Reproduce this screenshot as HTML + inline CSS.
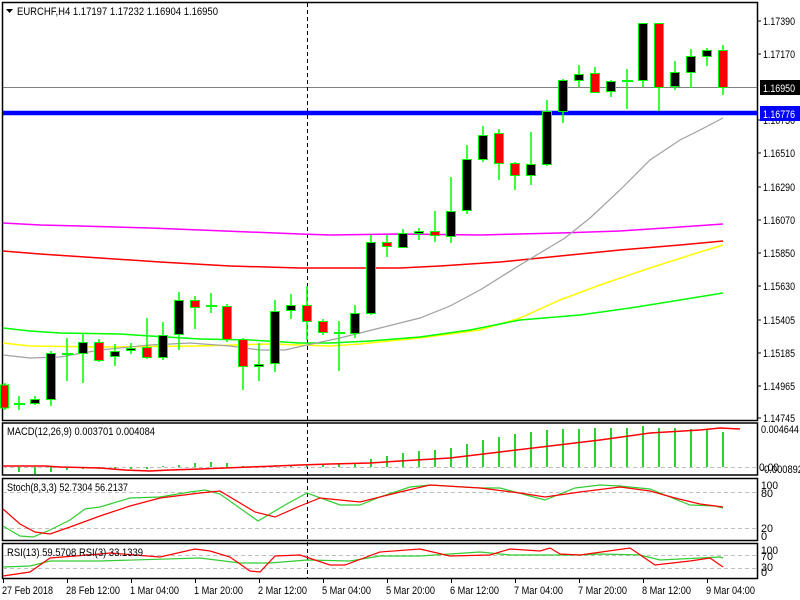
<!DOCTYPE html>
<html><head><meta charset="utf-8"><style>
html,body{margin:0;padding:0;background:#fff;width:800px;height:600px;overflow:hidden}
svg{display:block}
text{font-family:"Liberation Sans",sans-serif;font-size:11px;fill:#000}
</style></head><body>
<svg width="800" height="600" viewBox="0 0 800 600" xmlns="http://www.w3.org/2000/svg">
<rect width="800" height="600" fill="#fff"/>
<g fill="none" stroke="#000" stroke-width="1.5">
<rect x="2.5" y="2.5" width="755" height="418"/>
<rect x="2.5" y="423" width="755" height="52"/>
<rect x="2.5" y="478.5" width="755" height="62"/>
<rect x="2.5" y="543.5" width="755" height="35"/>
</g>
<g stroke="#c0c0c0" stroke-dasharray="4,3" stroke-width="1">
<line x1="3" y1="467.5" x2="757" y2="467.5"/>
<line x1="3" y1="492.5" x2="757" y2="492.5"/>
<line x1="3" y1="528.5" x2="757" y2="528.5"/>
<line x1="3" y1="555.5" x2="757" y2="555.5"/>
<line x1="3" y1="568.5" x2="757" y2="568.5"/>
</g>
<line x1="3" y1="87.5" x2="757" y2="87.5" stroke="#808080" stroke-width="1"/>
<line x1="3" y1="113" x2="757" y2="113" stroke="#0000ff" stroke-width="4.5"/>
<line x1="307.5" y1="3" x2="307.5" y2="578" stroke="#000" stroke-dasharray="4,3" stroke-width="1"/>
<g fill="none" stroke-width="1.5">
<polyline stroke="#ff00ff" points="3,223 40,225 80,226 150,228 200,230 300,234 330,235 400,234 480,235 560,233 620,231 680,227 723,224"/>
<polyline stroke="#ff0000" points="3,251 40,254 100,258 160,262 230,266 300,268 340,268 400,268 440,266 500,262 560,256 620,250 680,245 723,241"/>
<polyline stroke="#ffff00" points="3,343 30,346 100,347 200,346 270,344 330,346 360,344 420,338 480,330 520,318 560,300 600,285 650,268 700,252 723,245"/>
<polyline stroke="#00ff00" points="3,328 30,331 60,333 120,334 150,336 200,339 250,340 300,343 330,343 370,341 420,337 470,330 520,320 580,315 630,308 680,300 723,293"/>
<polyline stroke="#a0a0a0" stroke-width="1.2" points="3,355 30,358 60,357 100,350 150,345 190,343 230,346 260,350 285,350 307,345 340,338 380,328 420,318 450,306 480,290 520,265 545,250 565,238 590,218 620,190 650,160 680,140 700,130 723,118"/>
</g>
<g stroke="#00ff00" stroke-width="1.5">
<line x1="5" y1="383" x2="5" y2="410"/><line x1="19" y1="396" x2="19" y2="410"/><line x1="35" y1="396" x2="35" y2="405"/><line x1="51" y1="351" x2="51" y2="406"/><line x1="67" y1="338" x2="67" y2="381"/><line x1="83" y1="334" x2="83" y2="383"/><line x1="99" y1="339" x2="99" y2="362"/><line x1="115" y1="344" x2="115" y2="366"/><line x1="131" y1="343" x2="131" y2="354"/><line x1="147" y1="318" x2="147" y2="359"/><line x1="163" y1="322" x2="163" y2="360"/><line x1="179" y1="292" x2="179" y2="350"/><line x1="195" y1="296" x2="195" y2="329"/><line x1="211" y1="293" x2="211" y2="313"/><line x1="227" y1="304" x2="227" y2="342"/><line x1="243" y1="338" x2="243" y2="390"/><line x1="259" y1="343" x2="259" y2="381"/><line x1="275" y1="300" x2="275" y2="372"/><line x1="291" y1="294" x2="291" y2="319"/><line x1="307" y1="286" x2="307" y2="340"/><line x1="323" y1="319" x2="323" y2="335"/><line x1="339" y1="321" x2="339" y2="371"/><line x1="355" y1="305" x2="355" y2="338"/><line x1="371" y1="235" x2="371" y2="315"/><line x1="387" y1="235" x2="387" y2="257"/><line x1="403" y1="229" x2="403" y2="247"/><line x1="419" y1="228" x2="419" y2="240"/><line x1="435" y1="211" x2="435" y2="242"/><line x1="451" y1="177" x2="451" y2="243"/><line x1="467" y1="145" x2="467" y2="214"/><line x1="483" y1="126" x2="483" y2="162"/><line x1="499" y1="129" x2="499" y2="180"/><line x1="515" y1="162" x2="515" y2="190"/><line x1="531" y1="132" x2="531" y2="185"/><line x1="547" y1="100" x2="547" y2="166"/><line x1="563" y1="79" x2="563" y2="123"/><line x1="579" y1="65" x2="579" y2="87"/><line x1="595" y1="67" x2="595" y2="93"/><line x1="611" y1="80" x2="611" y2="97"/><line x1="627" y1="69" x2="627" y2="109"/><line x1="643" y1="23" x2="643" y2="87"/><line x1="659" y1="23" x2="659" y2="111"/><line x1="675" y1="61" x2="675" y2="90"/><line x1="691" y1="49" x2="691" y2="88"/><line x1="707" y1="48" x2="707" y2="66"/><line x1="723" y1="45" x2="723" y2="95"/>
<line x1="14" y1="404" x2="25" y2="404" stroke-width="2"/><line x1="62" y1="354" x2="73" y2="354" stroke-width="2"/><line x1="206" y1="306" x2="217" y2="306" stroke-width="2"/><line x1="334" y1="333" x2="345" y2="333" stroke-width="2"/><line x1="622" y1="81" x2="633" y2="81" stroke-width="2"/>
</g>
<g stroke="#00ff00" stroke-width="1">
<rect x="0.5" y="385" width="8" height="23" fill="#ff0000"/>
<rect x="30.5" y="399.5" width="9" height="4" fill="#000"/>
<rect x="46.5" y="353.5" width="9" height="46" fill="#000"/>
<rect x="78.5" y="342.5" width="9" height="11" fill="#000"/>
<rect x="94.5" y="342.5" width="9" height="18" fill="#ff0000"/>
<rect x="110.5" y="351.5" width="9" height="5" fill="#000"/>
<rect x="126.5" y="348.5" width="9" height="2" fill="#000"/>
<rect x="142.5" y="347.5" width="9" height="10" fill="#ff0000"/>
<rect x="158.5" y="335.5" width="9" height="22" fill="#000"/>
<rect x="174.5" y="300.5" width="9" height="34" fill="#000"/>
<rect x="190.5" y="300.5" width="9" height="7" fill="#ff0000"/>
<rect x="222.5" y="306.5" width="9" height="33" fill="#ff0000"/>
<rect x="238.5" y="339.5" width="9" height="27" fill="#ff0000"/>
<rect x="254.5" y="364.5" width="9" height="2" fill="#000"/>
<rect x="270.5" y="311.5" width="9" height="52" fill="#000"/>
<rect x="286.5" y="305.5" width="9" height="5" fill="#000"/>
<rect x="302.5" y="305.5" width="9" height="16" fill="#ff0000"/>
<rect x="318.5" y="321.5" width="9" height="11" fill="#ff0000"/>
<rect x="350.5" y="313.5" width="9" height="20" fill="#000"/>
<rect x="366.5" y="242.5" width="9" height="71" fill="#000"/>
<rect x="382.5" y="242.5" width="9" height="4" fill="#ff0000"/>
<rect x="398.5" y="233.5" width="9" height="14" fill="#000"/>
<rect x="414.5" y="231.5" width="9" height="2" fill="#000"/>
<rect x="430.5" y="231.5" width="9" height="4" fill="#ff0000"/>
<rect x="446.5" y="211.5" width="9" height="25" fill="#000"/>
<rect x="462.5" y="159.5" width="9" height="51" fill="#000"/>
<rect x="478.5" y="135.5" width="9" height="24" fill="#000"/>
<rect x="494.5" y="133.5" width="9" height="30" fill="#ff0000"/>
<rect x="510.5" y="163.5" width="9" height="12" fill="#ff0000"/>
<rect x="526.5" y="164.5" width="9" height="11" fill="#000"/>
<rect x="542.5" y="111.5" width="9" height="53" fill="#000"/>
<rect x="558.5" y="80.5" width="9" height="31" fill="#000"/>
<rect x="574.5" y="74.5" width="9" height="6" fill="#000"/>
<rect x="590.5" y="73.5" width="9" height="19" fill="#ff0000"/>
<rect x="606.5" y="81.5" width="9" height="10" fill="#000"/>
<rect x="638.5" y="23.5" width="9" height="57" fill="#000"/>
<rect x="654.5" y="23.5" width="9" height="64" fill="#ff0000"/>
<rect x="670.5" y="72.5" width="9" height="14" fill="#000"/>
<rect x="686.5" y="56.5" width="9" height="16" fill="#000"/>
<rect x="702.5" y="50.5" width="9" height="6" fill="#000"/>
<rect x="718.5" y="50.5" width="9" height="37" fill="#ff0000"/>
</g>
<g stroke="#32cd32" stroke-width="2">
<line x1="19" y1="467" x2="19" y2="472"/><line x1="35" y1="467" x2="35" y2="474"/><line x1="51" y1="467" x2="51" y2="472"/><line x1="67" y1="467" x2="67" y2="470"/><line x1="83" y1="467" x2="83" y2="469"/><line x1="99" y1="467" x2="99" y2="469"/><line x1="115" y1="467" x2="115" y2="469"/><line x1="131" y1="467" x2="131" y2="469"/><line x1="147" y1="467" x2="147" y2="469"/><line x1="163" y1="467" x2="163" y2="466"/><line x1="179" y1="467" x2="179" y2="465"/><line x1="195" y1="467" x2="195" y2="463"/><line x1="211" y1="467" x2="211" y2="462"/><line x1="227" y1="467" x2="227" y2="463"/><line x1="243" y1="467" x2="243" y2="466"/><line x1="259" y1="467" x2="259" y2="466"/><line x1="275" y1="467" x2="275" y2="465"/><line x1="291" y1="467" x2="291" y2="465"/><line x1="307" y1="467" x2="307" y2="465"/><line x1="323" y1="467" x2="323" y2="464"/><line x1="339" y1="467" x2="339" y2="464"/><line x1="355" y1="467" x2="355" y2="464"/><line x1="371" y1="467" x2="371" y2="459"/><line x1="387" y1="467" x2="387" y2="456"/><line x1="403" y1="467" x2="403" y2="453"/><line x1="419" y1="467" x2="419" y2="451"/><line x1="435" y1="467" x2="435" y2="450"/><line x1="451" y1="467" x2="451" y2="448"/><line x1="467" y1="467" x2="467" y2="444"/><line x1="483" y1="467" x2="483" y2="440"/><line x1="499" y1="467" x2="499" y2="437"/><line x1="515" y1="467" x2="515" y2="434"/><line x1="531" y1="467" x2="531" y2="432"/><line x1="547" y1="467" x2="547" y2="430"/><line x1="563" y1="467" x2="563" y2="429"/><line x1="579" y1="467" x2="579" y2="429"/><line x1="595" y1="467" x2="595" y2="428"/><line x1="611" y1="467" x2="611" y2="428"/><line x1="627" y1="467" x2="627" y2="428"/><line x1="643" y1="467" x2="643" y2="426"/><line x1="659" y1="467" x2="659" y2="428"/><line x1="675" y1="467" x2="675" y2="428"/><line x1="691" y1="467" x2="691" y2="429"/><line x1="707" y1="467" x2="707" y2="430"/><line x1="723" y1="467" x2="723" y2="432"/>
</g>
<polyline fill="none" stroke="#ff0000" stroke-width="1.5" points="3,466 45,466 60,467 100,468 125,470 150,471 170,470 200,469 250,467 300,465 330,464 370,463 400,461 450,458 500,452 550,446 600,440 650,433 700,430 720,428 740,429"/>
<polyline fill="none" stroke="#32cd32" stroke-width="1.2" points="3,526 20,536 33,537 50,530 70,520 85,509 100,507 130,498 160,497 190,492 205,490 220,494 258,521 285,505 307,493 340,505 360,505 380,497 410,487 430,485 480,488 500,488 530,496 545,500 575,488 600,485 620,486 650,489 690,505 715,506 723,508"/>
<polyline fill="none" stroke="#ff0000" stroke-width="1.2" points="3,509 20,524 35,532 50,534 70,527 100,516 130,506 160,498 200,493 220,491 255,512 275,517 300,506 320,498 360,502 400,492 430,485 480,488 520,493 545,497 580,492 620,487 650,491 675,498 700,504 723,507"/>
<polyline fill="none" stroke="#32cd32" stroke-width="1.2" points="3,567 30,566 50,561 100,561 200,558 240,563 270,563 307,560 350,561 380,556 420,556 480,552 510,555 580,555 600,554 640,555 660,560 720,557 723,558"/>
<polyline fill="none" stroke="#ff0000" stroke-width="1.2" points="3,576 30,572 50,558 100,554 110,553 160,557 195,549 210,551 230,557 250,571 260,572 275,556 300,555 330,565 345,565 380,552 420,549 450,556 490,555 510,549 540,551 550,548 560,554 580,555 630,548 655,565 690,561 710,558 723,567"/>
<path d="M6 9 L13 9 L9.5 13 Z" fill="#000"/>
<text x="17" y="15" textLength="201" lengthAdjust="spacingAndGlyphs">EURCHF,H4  1.17197 1.17232 1.16904 1.16950</text>
<text x="7" y="435" textLength="148" lengthAdjust="spacingAndGlyphs">MACD(12,26,9) 0.003701 0.004084</text>
<text x="7" y="491" textLength="121" lengthAdjust="spacingAndGlyphs">Stoch(8,3,3) 52.7304 56.2137</text>
<text x="7" y="556" textLength="136" lengthAdjust="spacingAndGlyphs">RSI(13) 59.5708  RSI(3) 33.1339</text>
<g stroke="#000" stroke-width="1">
<line x1="757" y1="21" x2="761" y2="21"/><line x1="757" y1="54" x2="761" y2="54"/><line x1="757" y1="120" x2="761" y2="120"/><line x1="757" y1="153" x2="761" y2="153"/><line x1="757" y1="187" x2="761" y2="187"/><line x1="757" y1="220" x2="761" y2="220"/><line x1="757" y1="253" x2="761" y2="253"/><line x1="757" y1="286" x2="761" y2="286"/><line x1="757" y1="320" x2="761" y2="320"/><line x1="757" y1="353" x2="761" y2="353"/><line x1="757" y1="386" x2="761" y2="386"/><line x1="757" y1="418" x2="761" y2="418"/>
</g>
<g>
<text x="763" y="25" textLength="32" lengthAdjust="spacingAndGlyphs">1.17390</text>
<text x="763" y="58" textLength="32" lengthAdjust="spacingAndGlyphs">1.17170</text>
<text x="763" y="124" textLength="32" lengthAdjust="spacingAndGlyphs">1.16730</text>
<text x="763" y="157" textLength="32" lengthAdjust="spacingAndGlyphs">1.16510</text>
<text x="763" y="191" textLength="32" lengthAdjust="spacingAndGlyphs">1.16290</text>
<text x="763" y="224" textLength="32" lengthAdjust="spacingAndGlyphs">1.16070</text>
<text x="763" y="257" textLength="32" lengthAdjust="spacingAndGlyphs">1.15850</text>
<text x="763" y="290" textLength="32" lengthAdjust="spacingAndGlyphs">1.15630</text>
<text x="763" y="324" textLength="32" lengthAdjust="spacingAndGlyphs">1.15405</text>
<text x="763" y="357" textLength="32" lengthAdjust="spacingAndGlyphs">1.15185</text>
<text x="763" y="390" textLength="32" lengthAdjust="spacingAndGlyphs">1.14965</text>
<text x="763" y="422" textLength="32" lengthAdjust="spacingAndGlyphs">1.14745</text>
</g>
<rect x="760" y="80" width="40" height="15" fill="#000"/>
<text x="763" y="92" textLength="32" lengthAdjust="spacingAndGlyphs" style="fill:#fff">1.16950</text>
<rect x="760" y="106" width="40" height="15" fill="#0000ff"/>
<text x="763" y="118" textLength="32" lengthAdjust="spacingAndGlyphs" style="fill:#fff">1.16776</text>
<text x="761" y="433" textLength="38" lengthAdjust="spacingAndGlyphs">0.004644</text>
<text x="759" y="471" textLength="20" lengthAdjust="spacingAndGlyphs">0.00</text>
<text x="761" y="473" textLength="42" lengthAdjust="spacingAndGlyphs">-0.000892</text>
<text x="761" y="489" textLength="17" lengthAdjust="spacingAndGlyphs">100</text>
<text x="761" y="497" textLength="12" lengthAdjust="spacingAndGlyphs">80</text>
<text x="761" y="532" textLength="12" lengthAdjust="spacingAndGlyphs">20</text>
<text x="761" y="540">0</text>
<text x="761" y="554" textLength="17" lengthAdjust="spacingAndGlyphs">100</text>
<text x="761" y="560" textLength="12" lengthAdjust="spacingAndGlyphs">70</text>
<text x="761" y="571" textLength="12" lengthAdjust="spacingAndGlyphs">30</text>
<text x="761" y="576">0</text>
<g stroke="#000" stroke-width="1">
<line x1="3.5" y1="579" x2="3.5" y2="583"/><line x1="67.5" y1="579" x2="67.5" y2="583"/><line x1="131.5" y1="579" x2="131.5" y2="583"/><line x1="195.5" y1="579" x2="195.5" y2="583"/><line x1="259.5" y1="579" x2="259.5" y2="583"/><line x1="323.5" y1="579" x2="323.5" y2="583"/><line x1="387.5" y1="579" x2="387.5" y2="583"/><line x1="451.5" y1="579" x2="451.5" y2="583"/><line x1="515.5" y1="579" x2="515.5" y2="583"/><line x1="579.5" y1="579" x2="579.5" y2="583"/><line x1="643.5" y1="579" x2="643.5" y2="583"/><line x1="707.5" y1="579" x2="707.5" y2="583"/>
</g>
<g>
<text x="2" y="594" textLength="51" lengthAdjust="spacingAndGlyphs">27 Feb 2018</text>
<text x="66" y="594" textLength="54" lengthAdjust="spacingAndGlyphs">28 Feb 12:00</text>
<text x="130" y="594" textLength="49" lengthAdjust="spacingAndGlyphs">1 Mar 04:00</text>
<text x="194" y="594" textLength="49" lengthAdjust="spacingAndGlyphs">1 Mar 20:00</text>
<text x="258" y="594" textLength="49" lengthAdjust="spacingAndGlyphs">2 Mar 12:00</text>
<text x="322" y="594" textLength="49" lengthAdjust="spacingAndGlyphs">5 Mar 04:00</text>
<text x="386" y="594" textLength="49" lengthAdjust="spacingAndGlyphs">5 Mar 20:00</text>
<text x="450" y="594" textLength="49" lengthAdjust="spacingAndGlyphs">6 Mar 12:00</text>
<text x="514" y="594" textLength="49" lengthAdjust="spacingAndGlyphs">7 Mar 04:00</text>
<text x="578" y="594" textLength="49" lengthAdjust="spacingAndGlyphs">7 Mar 20:00</text>
<text x="642" y="594" textLength="49" lengthAdjust="spacingAndGlyphs">8 Mar 12:00</text>
<text x="706" y="594" textLength="49" lengthAdjust="spacingAndGlyphs">9 Mar 04:00</text>
</g>
</svg>
</body></html>
